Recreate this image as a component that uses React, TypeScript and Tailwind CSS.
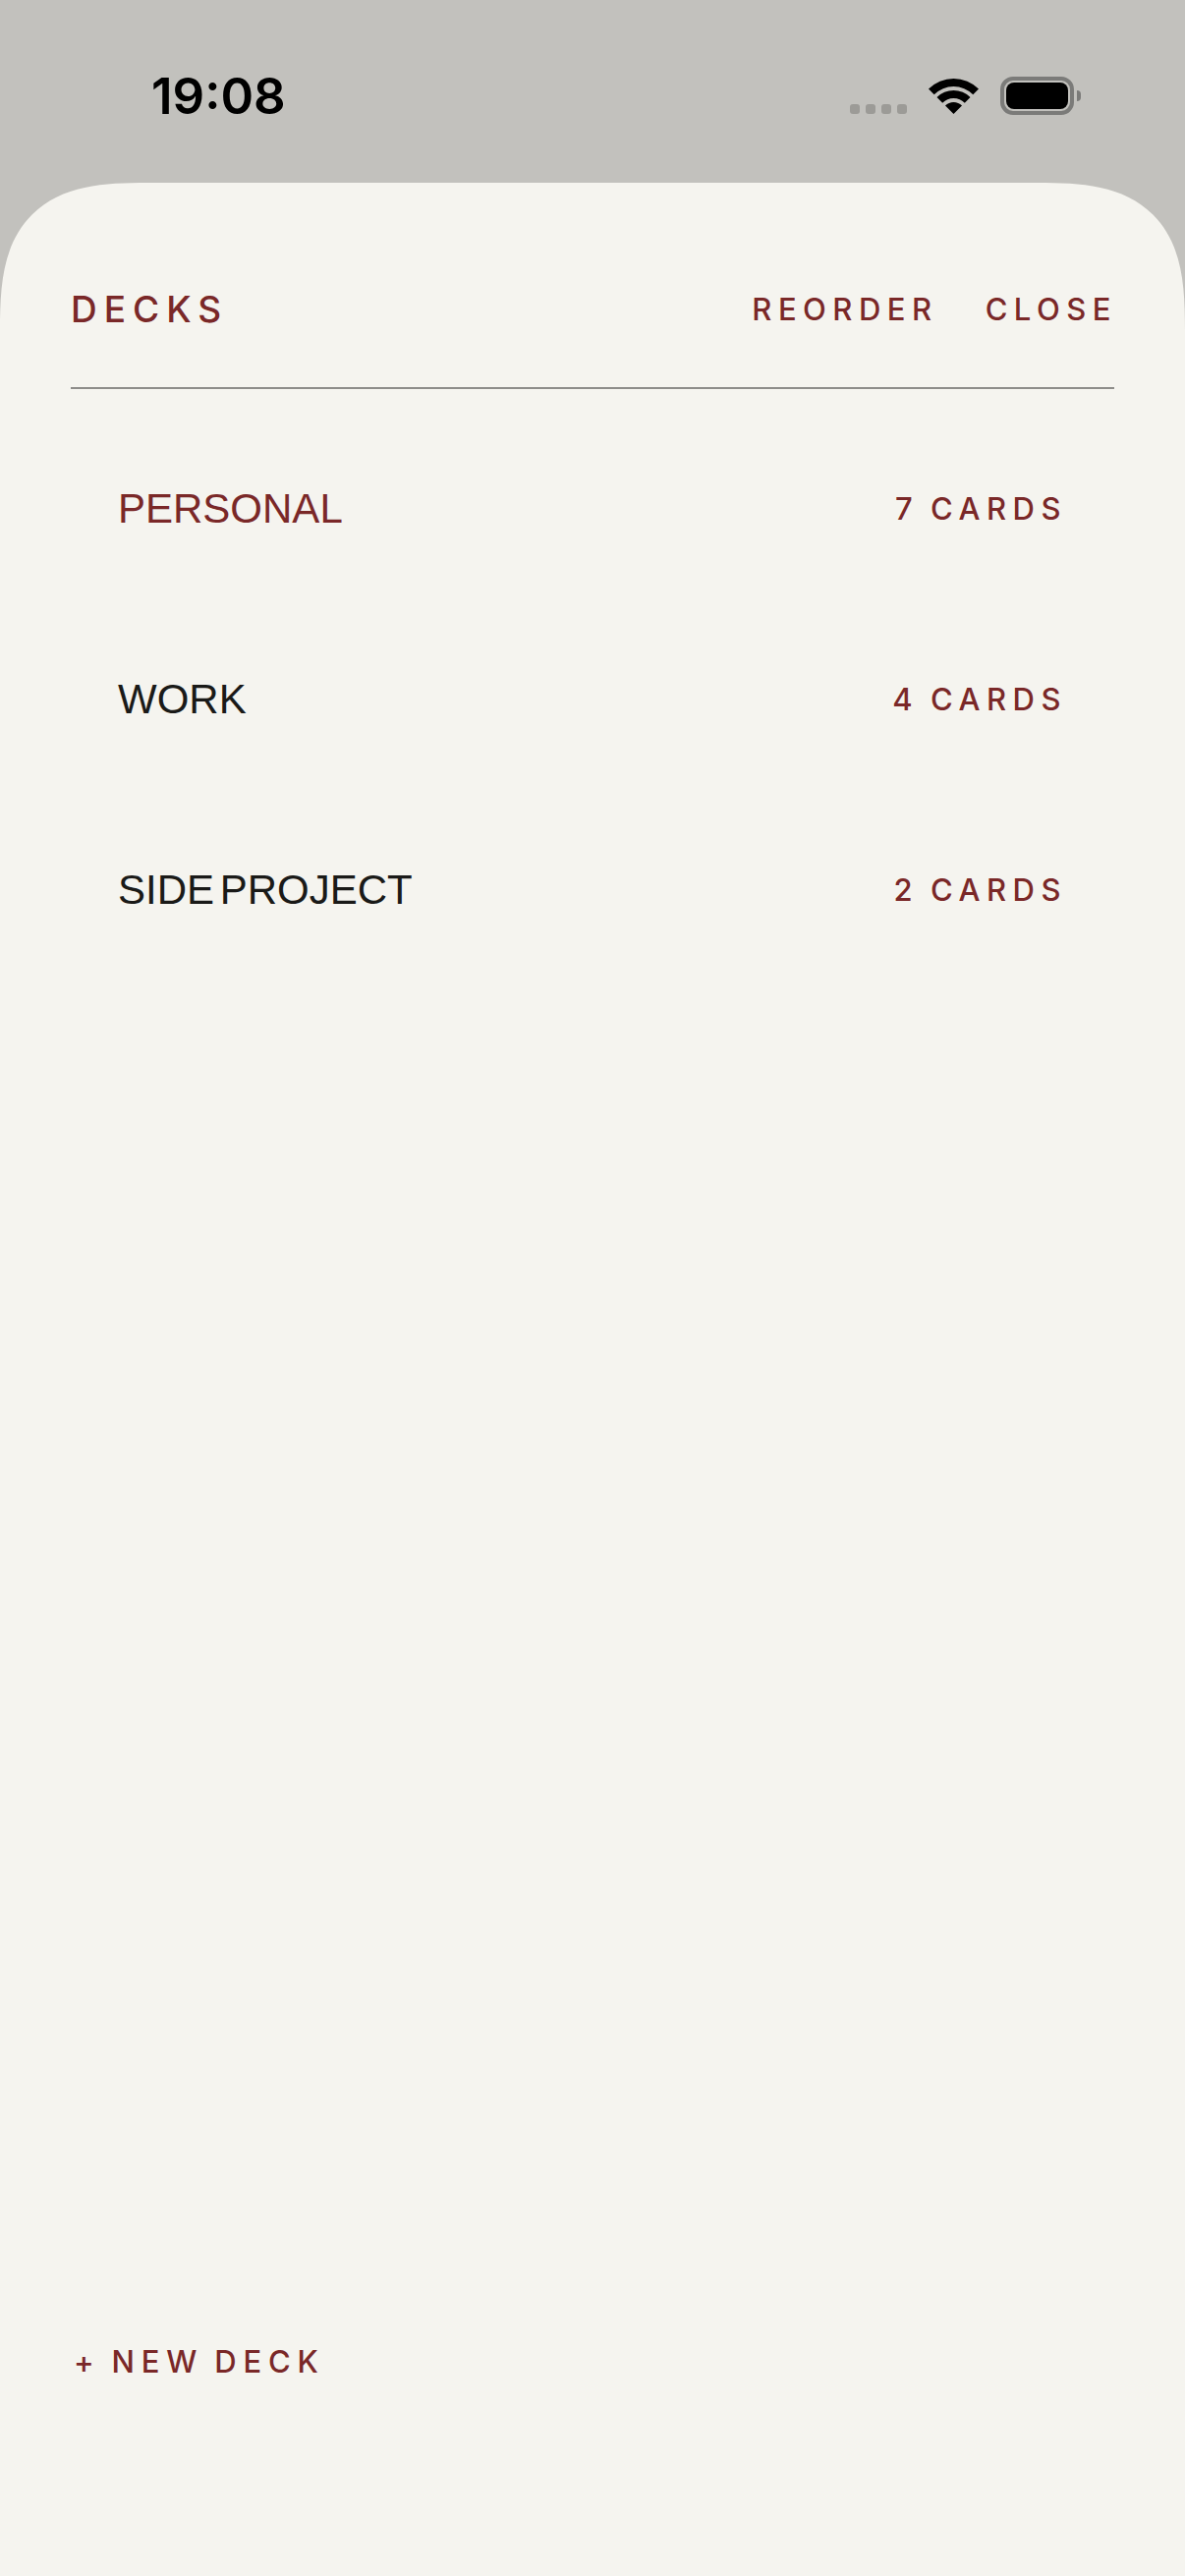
const decks = [
  { name: 'PERSONAL', count: '7 CARDS', active: true },
  { name: 'WORK', count: '4 CARDS', active: false },
  { name: 'SIDE PROJECT', count: '2 CARDS', active: false },
];

function WifiIcon() {
  return (
    <svg width="51" height="37" viewBox="0 0 51 37" fill="#000">
      <path d="M0 11.5A36 36 0 0 1 51 11.5L45.3 17.2A28 28 0 0 0 5.7 17.2Z" />
      <path d="M8.5 20A24 24 0 0 1 42.5 20L36.8 25.7A16 16 0 0 0 14.2 25.7Z" />
      <path d="M25.5 37L17 28.5A12 12 0 0 1 34 28.5Z" />
    </svg>
  );
}

function BatteryIcon() {
  return (
    <div className="flex items-center gap-[3px]">
      <div className="w-[75px] h-[39px] rounded-[13px] border-[4px] border-[#7b7b79] p-[2px]">
        <div className="w-full h-full rounded-[8px] bg-black" />
      </div>
      <div className="w-[4px] h-[11px] rounded-r-full bg-[#7b7b79]" />
    </div>
  );
}

export default function App() {
  return (
    <div className="min-h-screen flex flex-col bg-[#c2c1bd] font-['Inter',sans-serif]">
      <div className="h-[186px] flex items-start justify-between pl-[154px] pr-[106px] pt-[78px]">
        <span className="text-[51px] leading-[40px] font-semibold text-black">19:08</span>
        <div className="flex items-start">
          <div className="flex gap-[6px] mt-[28px] mr-[22px]">
            {[0, 1, 2, 3].map((i) => (
              <div key={i} className="w-[10px] h-[10px] rounded-[3px] bg-[#9c9b97]" />
            ))}
          </div>
          <div className="mt-[1px] mr-[22px]">
            <WifiIcon />
          </div>
          <BatteryIcon />
        </div>
      </div>

      <div className="flex-1 flex flex-col bg-[#f5f4ef] rounded-t-[150px] [corner-shape:superellipse(1.5)] px-[72px]">
        <div className="h-[210px] flex items-end justify-between border-b-2 border-[#8e8d8a] pb-[57px]">
          <span className="text-[37px] leading-[44px] font-medium tracking-[7px] text-[#7a2828]">DECKS</span>
          <div className="flex gap-[48px] mb-[2px]">
            <span className="text-[31px] leading-[40px] font-medium tracking-[6.5px] text-[#7a2828]">REORDER</span>
            <span className="text-[31px] leading-[40px] font-medium tracking-[6.5px] text-[#7a2828] mr-[-3px]">CLOSE</span>
          </div>
        </div>

        <div className="flex flex-col pt-[25px] px-[48px]">
          {decks.map((deck) => (
            <div key={deck.name} className="h-[194px] flex items-center justify-between">
              <span
                className={`font-['Liberation_Sans',sans-serif] text-[42px] leading-[56px] [word-spacing:-6px] ${
                  deck.active ? 'text-[#7a2828]' : 'text-[#1a1a18]'
                }`}
              >
                {deck.name}
              </span>
              <span className="text-[31px] leading-[40px] font-medium tracking-[6.5px] [word-spacing:-3px] text-[#7a2828]">
                {deck.count}
              </span>
            </div>
          ))}
        </div>

        <div className="mt-auto pb-[198px] pl-[3px]">
          <span className="text-[31px] leading-[40px] font-medium tracking-[6.8px] [word-spacing:-4px] text-[#7a2828]">
            + NEW DECK
          </span>
        </div>
      </div>
    </div>
  );
}
